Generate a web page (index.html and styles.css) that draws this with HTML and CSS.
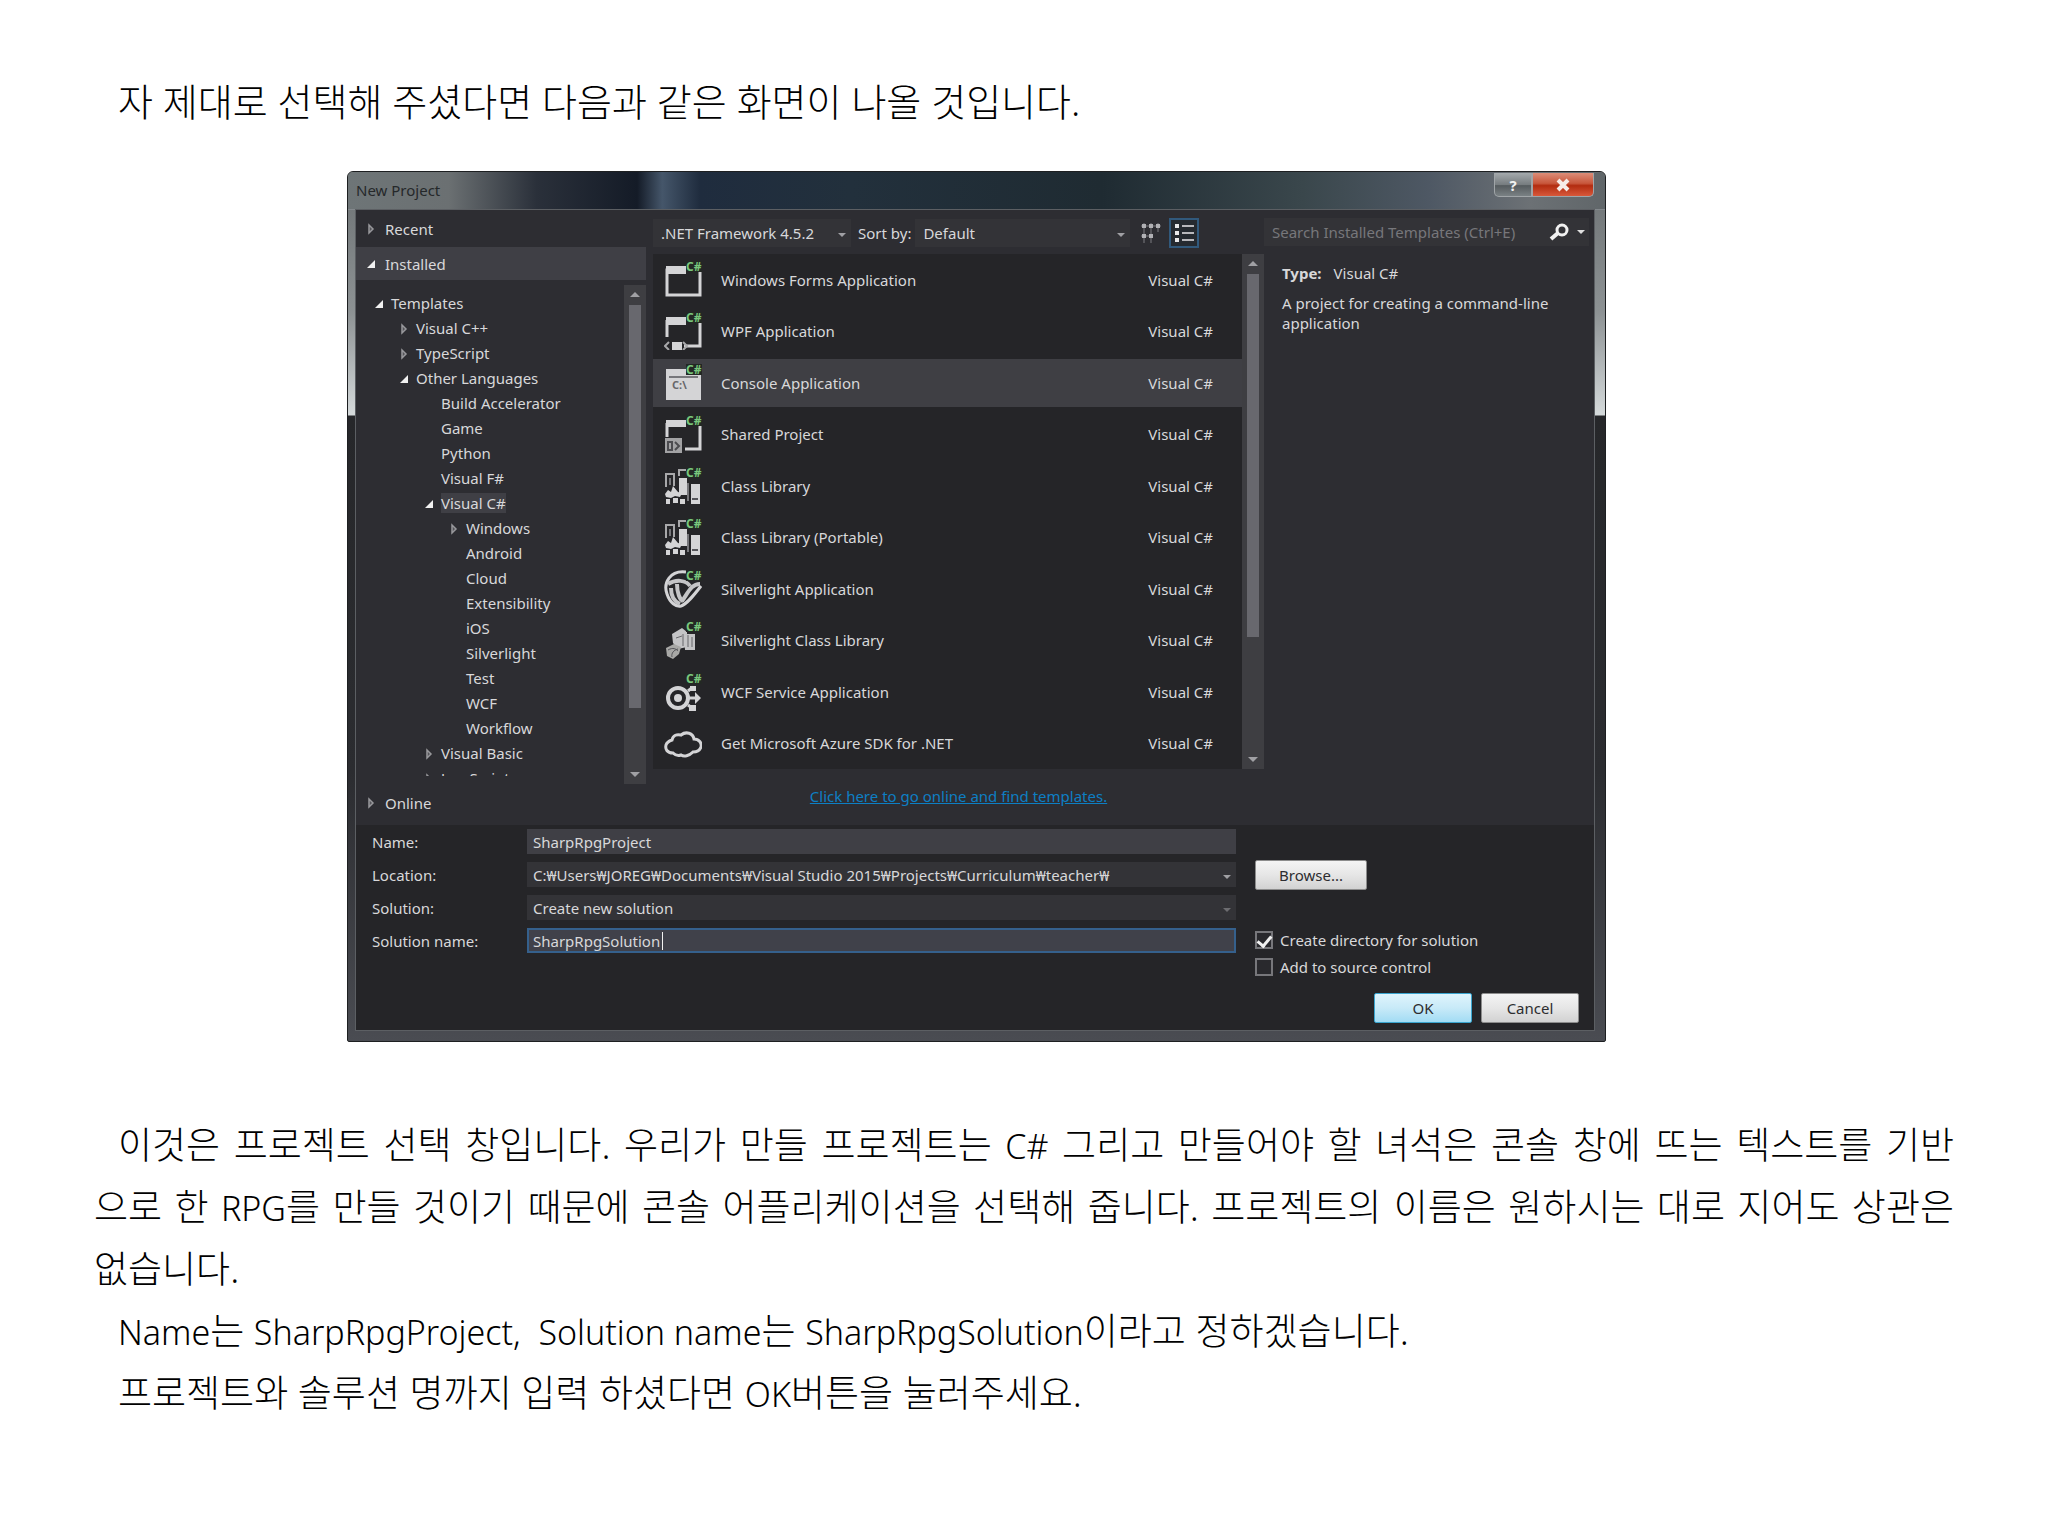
FILE: index.html
```html
<!DOCTYPE html>
<html lang="ko">
<head>
    <meta charset="UTF-8">
    <meta name="viewport" content="width=device-width, initial-scale=1.0">
    <title>New Project</title>
    <link rel="stylesheet" href="styles.css">
</head>
<body>
    <!-- Iconos compartidos -->
    <svg class="sprite" aria-hidden="true">
        <symbol id="closed" viewBox="0 0 10 12"><path d="M2 2v8l4-4z" fill="#55555a" stroke="#98989c" stroke-width="1.5"/></symbol>
        <symbol id="open" viewBox="0 0 10 12"><path d="M8 2v8H0z" fill="#f1f1f1"/></symbol>
        <symbol id="cs" viewBox="0 0 38 38">
            <path d="M22 0h16v11H22z" fill="#232824"/>
            <text x="22" y="10" class="cs-text">C#</text>
        </symbol>
        <symbol id="forms" viewBox="0 0 38 38">
            <path d="M3 9h33v25H3z" fill="none" stroke="#d4d4d6" stroke-width="3"/>
            <path d="M2 5h20v8H2z" fill="#d4d4d6"/>
            <use href="#cs"/>
        </symbol>
        <symbol id="wpf" viewBox="0 0 38 38">
            <path d="M3 25V8M36 11v23H20" fill="none" stroke="#d4d4d6" stroke-width="3"/>
            <path d="M2 5h20v8H2zM8 30h10v8H8z" fill="#d4d4d6"/>
            <path d="M5 30l-4 4 4 4M19 30l4 4-4 4" fill="none" stroke="#a8a8aa" stroke-width="2"/>
            <use href="#cs"/>
        </symbol>
        <symbol id="console" viewBox="0 0 38 38">
            <path d="M2 5h35v31H2z" fill="#d4d4d6"/>
            <path d="M5 13h29" stroke="#77777b" stroke-width="2"/>
            <text x="8" y="25" class="console-text">C:\</text>
            <use href="#cs"/>
        </symbol>
        <symbol id="shared" viewBox="0 0 38 38">
            <path d="M3 22V8M36 11v23H21" fill="none" stroke="#d4d4d6" stroke-width="3"/>
            <path d="M2 5h20v7H2z" fill="#d4d4d6"/>
            <path d="M1 23h17v15H1z" fill="#a2a2a4"/>
            <path d="M4 27h4v8H4zM11 27l4 4-4 4" fill="none" stroke="#4b4b4f" stroke-width="2"/>
            <use href="#cs"/>
        </symbol>
        <symbol id="library" viewBox="0 0 38 38">
            <path d="M2 20V7h8v12M15 9V3h7" fill="none" stroke="#a8a8aa" stroke-width="2"/>
            <path d="M15 11h8v17h-8zM27 17h9v20h-9z" fill="#d4d4d6"/>
            <path d="M28 32h6" stroke="#55555a" stroke-width="2"/>
            <path d="M1 27l3-4 3 2 2-6 5 6 4 1-2 4-5-1-4 2-5-1zM2 32h4v5H2zM9 31h5v5H9zM16 32h5v5h-5z" fill="#d4d4d6"/>
            <path d="M6 11v7M24 16v18" stroke="#77777b" stroke-width="2"/>
            <use href="#cs"/>
        </symbol>
        <symbol id="silverlight" viewBox="0 0 38 38">
            <path d="M22 2C6 0-1 13 3 24c3 9 9 13 14 12 6-2 13-11 20-20" fill="none" stroke="#d4d4d6" stroke-width="3"/>
            <path d="M4 14c8-5 18-4 22 2M7 18c0 9 4 14 9 16M13 14c0 9 3 16 6 17M36 14c-9 0-12 9-18 17" fill="none" stroke="#c4c4c6" stroke-width="4"/>
            <use href="#cs"/>
        </symbol>
        <symbol id="silverlib" viewBox="0 0 38 38">
            <path d="M8 13l10-6 5 4v15l-9 2-5-6zM20 13h11v16H21z" fill="#c4c4c6"/>
            <path d="M12 17l6-2M24 14v12M19 13v12M28 16v10" stroke="#66666a" stroke-width="1"/>
            <path d="M2 27l8-4 7 3-2 7-6 5-6-3z" fill="#a8a8a6"/>
            <path d="M4 29c5-3 8-1 10 1M8 36c-1-4 2-7 6-8" fill="none" stroke="#55555a" stroke-width="1"/>
            <use href="#cs"/>
        </symbol>
        <symbol id="wcf" viewBox="0 0 38 38">
            <circle cx="14" cy="25" r="10" fill="none" stroke="#d4d4d6" stroke-width="4"/>
            <circle cx="14" cy="25" r="4" fill="#d4d4d6"/>
            <path d="M24 25h8M24 18l5-4M24 32l4 3" stroke="#d4d4d6" stroke-width="3"/>
            <path d="M31 19l6 6-6 6zM25 32h7v6h-7zM26 13h6v5h-6z" fill="#d4d4d6"/>
            <use href="#cs"/>
        </symbol>
        <symbol id="cloud" viewBox="0 0 38 38">
            <path d="M9 29C3 29 1 25 2 21c1-3 3-4 6-5 1-5 5-6 9-5 5-4 12-2 13 4 5 0 8 4 7 8-1 3-4 5-8 5-4 4-9 5-12 3-3 1-6 0-8-2z" fill="none" stroke="#d4d4d6" stroke-width="3"/>
        </symbol>
    </svg>

    <article class="page">
        <p class="lead">자 제대로 선택해 주셨다면 다음과 같은 화면이 나올 것입니다.</p>

        <section class="dialog" aria-label="New Project">
            <header class="title-bar">
                <span class="title">New Project</span>
                <div class="window-buttons">
                    <button class="help" aria-label="Help">?</button>
                    <button class="close" aria-label="Close">
                        <svg width="14" height="14" viewBox="0 0 14 14"><path d="M2 2l10 10M12 2L2 12" stroke="#f6ece8" stroke-width="4"/></svg>
                    </button>
                </div>
            </header>

            <div class="content">
                <div class="top">
                    <nav class="sidebar">
                        <button class="section"><svg class="arrow"><use href="#closed"/></svg>Recent</button>
                        <button class="section active"><svg class="arrow"><use href="#open"/></svg>Installed</button>
                        <div class="tree-area">
                            <ul class="tree">
                                <li><svg class="arrow"><use href="#open"/></svg>Templates
                                    <ul>
                                        <li><svg class="arrow"><use href="#closed"/></svg>Visual C++</li>
                                        <li><svg class="arrow"><use href="#closed"/></svg>TypeScript</li>
                                        <li><svg class="arrow"><use href="#open"/></svg>Other Languages
                                            <ul>
                                                <li class="leaf">Build Accelerator</li>
                                                <li class="leaf">Game</li>
                                                <li class="leaf">Python</li>
                                                <li class="leaf">Visual F#</li>
                                                <li><svg class="arrow"><use href="#open"/></svg><span class="current">Visual C#</span>
                                                    <ul>
                                                        <li><svg class="arrow"><use href="#closed"/></svg>Windows</li>
                                                        <li class="leaf">Android</li>
                                                        <li class="leaf">Cloud</li>
                                                        <li class="leaf">Extensibility</li>
                                                        <li class="leaf">iOS</li>
                                                        <li class="leaf">Silverlight</li>
                                                        <li class="leaf">Test</li>
                                                        <li class="leaf">WCF</li>
                                                        <li class="leaf">Workflow</li>
                                                    </ul>
                                                </li>
                                                <li><svg class="arrow"><use href="#closed"/></svg>Visual Basic</li>
                                                <li><svg class="arrow"><use href="#closed"/></svg>JavaScript</li>
                                            </ul>
                                        </li>
                                    </ul>
                                </li>
                            </ul>
                            <div class="scrollbar tree-scroll"><i class="up"></i><i class="thumb"></i><i class="down"></i></div>
                        </div>
                        <button class="section"><svg class="arrow"><use href="#closed"/></svg>Online</button>
                    </nav>

                    <main class="templates">
                        <div class="toolbar">
                            <span class="combo framework"><select aria-label="Framework"><option>.NET Framework 4.5.2</option></select></span>
                            <label for="sort">Sort by:</label>
                            <span class="combo sort"><select id="sort"><option>Default</option></select></span>
                            <button class="view" aria-label="Small icons">
                                <svg width="20" height="20" viewBox="0 0 20 20"><path d="M0 3h20M0 13h12M3 0v20M10 0v20M17 0v9" stroke="#7c7c80" stroke-width="1"/><path d="M1 1h4v4H1zM8 1h4v4H8zM15 1h4v4h-4zM1 11h4v4H1zM8 11h4v4H8z" fill="#b0b0b4"/></svg>
                            </button>
                            <button class="view selected" aria-label="List">
                                <svg width="20" height="20" viewBox="0 0 20 20"><path d="M1 1h4v4H1zM1 8h4v4H1zM1 15h4v4H1z" fill="#e8e8ea"/><path d="M8 3h12M8 10h12M8 17h12" stroke="#b8b8bc" stroke-width="2"/></svg>
                            </button>
                        </div>
                        <div class="list-area">
                            <ul class="list">
                                <li><svg><use href="#forms"/></svg><span>Windows Forms Application</span><span class="lang">Visual C#</span></li>
                                <li><svg><use href="#wpf"/></svg><span>WPF Application</span><span class="lang">Visual C#</span></li>
                                <li class="selected"><svg><use href="#console"/></svg><span>Console Application</span><span class="lang">Visual C#</span></li>
                                <li><svg><use href="#shared"/></svg><span>Shared Project</span><span class="lang">Visual C#</span></li>
                                <li><svg><use href="#library"/></svg><span>Class Library</span><span class="lang">Visual C#</span></li>
                                <li><svg><use href="#library"/></svg><span>Class Library (Portable)</span><span class="lang">Visual C#</span></li>
                                <li><svg><use href="#silverlight"/></svg><span>Silverlight Application</span><span class="lang">Visual C#</span></li>
                                <li><svg><use href="#silverlib"/></svg><span>Silverlight Class Library</span><span class="lang">Visual C#</span></li>
                                <li><svg><use href="#wcf"/></svg><span>WCF Service Application</span><span class="lang">Visual C#</span></li>
                                <li><svg><use href="#cloud"/></svg><span>Get Microsoft Azure SDK for .NET</span><span class="lang">Visual C#</span></li>
                            </ul>
                            <div class="scrollbar list-scroll"><i class="up"></i><i class="thumb"></i><i class="down"></i></div>
                        </div>
                        <a class="online-link" href="#">Click here to go online and find templates.</a>
                    </main>

                    <aside class="info">
                        <div class="search">
                            <input type="text" aria-label="Search" placeholder="Search Installed Templates (Ctrl+E)">
                            <svg width="20" height="18" viewBox="0 0 20 18"><circle cx="13" cy="7" r="5" fill="none" stroke="#f1f1f1" stroke-width="3"/><path d="M9 10l-7 6" stroke="#f1f1f1" stroke-width="4"/></svg>
                            <i class="caret-down"></i>
                        </div>
                        <div class="description">
                            <p><strong>Type:</strong>Visual C#</p>
                            <p>A project for creating a command-line application</p>
                        </div>
                    </aside>
                </div>

                <form class="bottom">
                    <div class="fields">
                        <label for="name">Name:</label>
                        <input type="text" id="name" value="SharpRpgProject">
                        <label for="location">Location:</label>
                        <span class="combo"><select id="location"><option>C:₩Users₩JOREG₩Documents₩Visual Studio 2015₩Projects₩Curriculum₩teacher₩</option></select></span>
                        <label for="solution">Solution:</label>
                        <span class="combo dim"><select id="solution"><option>Create new solution</option></select></span>
                        <label for="solutionName">Solution name:</label>
                        <span class="focused"><input type="text" id="solutionName" value="SharpRpgSolution"><i class="cursor"></i></span>
                    </div>
                    <div class="options">
                        <button type="button" class="btn browse">Browse...</button>
                        <label class="check"><input type="checkbox" checked>Create directory for solution</label>
                        <label class="check"><input type="checkbox">Add to source control</label>
                        <div class="actions">
                            <button type="button" class="btn ok">OK</button>
                            <button type="button" class="btn">Cancel</button>
                        </div>
                    </div>
                </form>
            </div>
        </section>

        <p>
            <span class="full">이것은 프로젝트 선택 창입니다. 우리가 만들 프로젝트는 <span class="latin">C#</span> 그리고 만들어야 할 녀석은 콘솔 창에 뜨는 텍스트를 기반</span><span class="full next">으로 한 <span class="latin">RPG</span>를 만들 것이기 때문에 콘솔 어플리케이션을 선택해 줍니다. 프로젝트의 이름은 원하시는 대로 지어도 상관은</span><span class="next">없습니다.</span>
        </p>
        <p><span class="latin">Name</span>는 <span class="latin">SharpRpgProject, &nbsp;Solution name</span>는 <span class="latin">SharpRpgSolution</span>이라고 정하겠습니다.</p>
        <p>프로젝트와 솔루션 명까지 입력 하셨다면 <span class="latin">OK</span>버튼을 눌러주세요.</p>
    </article>
</body>
</html>
```
FILE: styles.css
```css
* {
    box-sizing: border-box;
}

body {
    margin: 0;
    background-color: #fff;
    color: #000;
}

ul {
    list-style: none;
    margin: 0;
    padding: 0;
}

button, input, select {
    font: inherit;
    color: inherit;
    margin: 0;
}

.sprite {
    display: none;
}

.cs-text {
    font: bold 12px "Noto Sans", sans-serif;
    fill: #79c77d;
}

.console-text {
    font: bold 11px "Noto Sans", sans-serif;
    fill: #66666a;
}

.page {
    padding: 70px 94px;
    font-family: "Noto Sans", "Noto Sans CJK KR", sans-serif;
    font-size: 37px;
    font-weight: 300;
    line-height: 62px;
}

.page > p {
    margin: 0;
    padding-left: 24px;
}

.lead {
    font-size: 38px;
}

.latin {
    font-size: 34px;
    line-height: 1;
}

.full, .next {
    display: block;
}

.full {
    text-align-last: justify;
}

.next {
    margin-left: -24px;
}

/* Ventana */
.dialog {
    max-width: 1259px;
    margin: 39px 0 72px 253px;
    padding: 0 11px 11px 8px;
    border: 1px solid #1d1f21;
    border-radius: 6px 6px 2px 2px;
    background: linear-gradient(#6b7072, #8d9294 140px, #d5dadb 243px, #26272a 244px, #2b2c30 600px, #4a4c52);
    color: #d8d8da;
    font-size: 15px;
    font-weight: 400;
    line-height: 20px;
}

.title-bar {
    display: flex;
    justify-content: space-between;
    height: 38px;
    margin: 0 -11px 0 -8px;
    padding: 1px 11px 0 8px;
    border-radius: 5px 5px 0 0;
    border-bottom: 1px solid #83888c;
    background: linear-gradient(90deg, #6e7577, #6b7072 8%, #2a303a 15%, #141b27 23%, #45566a 25%, #1f2c3e 28%, #22303c 40%, #1f2b32 60%, #3a474c 76%, #4e5864 86%, #6c7175 94%, #606669);
}

.title {
    padding-top: 7px;
    color: #25282a;
}

.window-buttons {
    display: flex;
    align-items: flex-start;
}

.window-buttons button {
    height: 24px;
    padding: 0;
    border: 1px solid #a0a5a8;
    border-top: none;
    line-height: 22px;
}

.help {
    width: 38px;
    border-radius: 0 0 0 5px;
    background: linear-gradient(#a4a9ac, #777d80 50%, #555b5e 55%, #7a8184);
    color: #f1f1f1;
    font-weight: bold;
}

.close {
    display: flex;
    align-items: center;
    justify-content: center;
    width: 62px;
    border-radius: 0 0 5px 0;
    background: linear-gradient(#dc8d78, #c8573c 45%, #b22c10 55%, #d8583a);
}

.content {
    outline: 1px solid #5c5f63;
    background-color: #2d2d32;
}

.top {
    display: grid;
    grid-template-columns: 290px 1fr 330px;
    height: 615px;
}

/* Panel izquierdo */
.sidebar {
    display: flex;
    flex-direction: column;
}

.section {
    display: flex;
    align-items: center;
    gap: 8px;
    height: 37px;
    padding: 0 11px;
    border: none;
    background: none;
    text-align: left;
}

.section.active {
    height: 33px;
    background-color: #3f3f45;
}

.arrow {
    flex: none;
    width: 10px;
    height: 12px;
}

.tree-area {
    display: flex;
    justify-content: space-between;
    height: 504px;
    padding-top: 5px;
}

.tree {
    height: 491px;
    padding: 6px 0 0 19px;
    overflow: hidden;
    line-height: 25px;
}

.tree ul {
    padding-left: 25px;
}

.tree .arrow {
    margin-right: 6px;
    vertical-align: -1px;
}

.tree .leaf {
    padding-left: 16px;
}

.current {
    background-color: #3f3f45;
}

.scrollbar {
    display: flex;
    flex-direction: column;
    align-items: center;
    width: 22px;
    padding: 7px 0;
    background-color: #3e3e42;
}

.up, .down, .caret-down, .combo::after {
    width: 0;
    height: 0;
    border: 5px solid transparent;
}

.up {
    border-top: none;
    border-bottom-color: #a0a0a4;
}

.down, .caret-down, .combo::after {
    border-bottom: none;
    border-top-color: #a0a0a4;
}

.down {
    margin-top: auto;
}

.thumb {
    width: 12px;
    margin-top: 8px;
    background-color: #68686e;
}

.tree-scroll .thumb {
    height: 403px;
}

.list-scroll .thumb {
    height: 363px;
}

/* Lista de plantillas */
.templates {
    display: flex;
    flex-direction: column;
    margin-left: 7px;
    padding-top: 8px;
}

.toolbar {
    display: flex;
    align-items: center;
    height: 30px;
    margin-bottom: 6px;
}

.combo {
    position: relative;
    display: block;
}

.combo::after {
    content: "";
    position: absolute;
    right: 5px;
    top: 50%;
    border-width: 4px;
    border-bottom: none;
}

.combo select {
    appearance: none;
    display: block;
    width: 100%;
    height: 28px;
    padding: 0 8px;
    border: none;
    border-radius: 0;
    background-color: #333337;
}

.dim::after {
    border-top-color: #6c6c70;
}

.framework {
    width: 198px;
    margin-right: 7px;
}

.sort {
    flex: 1;
    margin: 0 6px 0 4px;
}

.view {
    display: flex;
    align-items: center;
    justify-content: center;
    width: 30px;
    height: 30px;
    padding: 0;
    border: none;
    background: none;
}

.view.selected {
    margin: 0 65px 0 3px;
    border: 2px solid #31597c;
    background-color: #252a30;
}

.list-area {
    display: flex;
    height: 515px;
}

.list {
    display: flex;
    flex: 1;
    flex-direction: column;
    background-color: #252528;
}

.list li {
    display: flex;
    flex: 1;
    align-items: center;
    gap: 19px;
    padding: 0 29px 0 11px;
    border-top: 2px solid #252528;
    border-bottom: 2px solid #252528;
}

.list .selected {
    background-color: #3f3f44;
}

.list svg {
    width: 38px;
    height: 38px;
}

.lang {
    margin-left: auto;
}

.online-link {
    align-self: center;
    margin-top: 17px;
    color: #0d7fc4;
}

/* Panel derecho */
.info {
    padding: 8px 5px 0 0;
}

.search {
    display: flex;
    align-items: center;
    gap: 8px;
    height: 28px;
    padding-right: 4px;
    background-color: #333337;
}

.search input {
    flex: 1;
    min-width: 0;
    padding: 0 8px;
    border: none;
    background: none;
}

.search input::placeholder {
    color: #77777b;
    opacity: 1;
}

.search .caret-down {
    border-width: 4px;
    border-bottom: none;
    border-top-color: #e0e0e0;
}

.description {
    padding: 17px 24px 0 18px;
}

.description p {
    margin: 0 0 10px;
}

.description strong {
    margin-right: 12px;
}

/* Formulario */
.bottom {
    display: grid;
    grid-template-columns: 1fr 339px;
    gap: 19px;
    height: 205px;
    padding: 4px 0 0 16px;
    background-color: #252528;
}

.fields {
    display: grid;
    grid-template-columns: 155px 1fr;
    grid-auto-rows: 25px;
    gap: 8px 0;
    align-items: center;
    align-content: start;
}

.fields input {
    width: 100%;
    height: 25px;
    padding: 0 6px;
    border: none;
    background-color: #3f3f45;
}

.fields select {
    height: 25px;
    padding: 0 6px;
}

.focused {
    position: relative;
    display: block;
}

.focused input {
    border: 2px solid #35608c;
    padding: 0 4px;
    background-color: #40414a;
}

.cursor {
    position: absolute;
    left: 135px;
    top: 4px;
    width: 1px;
    height: 18px;
    background-color: #f1f1f1;
}

.options {
    display: flex;
    flex-direction: column;
    align-items: flex-start;
    padding-top: 31px;
}

.btn {
    width: 98px;
    height: 30px;
    padding: 0;
    border: 1px solid #8c8c8c;
    border-radius: 2px;
    background: linear-gradient(#f4f4f4, #e6e6e6 50%, #d2d2d2);
    color: #2d2d30;
}

.browse {
    width: 112px;
    margin-bottom: 36px;
}

.btn.ok {
    border-color: #3aa5cf;
    background: linear-gradient(#dff4fc, #c8eaf8 50%, #a2dcf4);
}

.check {
    display: flex;
    align-items: center;
    gap: 7px;
    height: 27px;
}

.check input {
    appearance: none;
    width: 18px;
    height: 18px;
    border: 2px solid #77777b;
    background-color: #29292d;
}

.check input:checked::after {
    content: "";
    display: block;
    width: 6px;
    height: 11px;
    margin: 0 auto;
    border: solid #f1f1f1;
    border-width: 0 3px 3px 0;
    transform: rotate(40deg);
}

.actions {
    display: flex;
    align-self: flex-end;
    gap: 9px;
    margin: 13px 15px 0 0;
}
```
